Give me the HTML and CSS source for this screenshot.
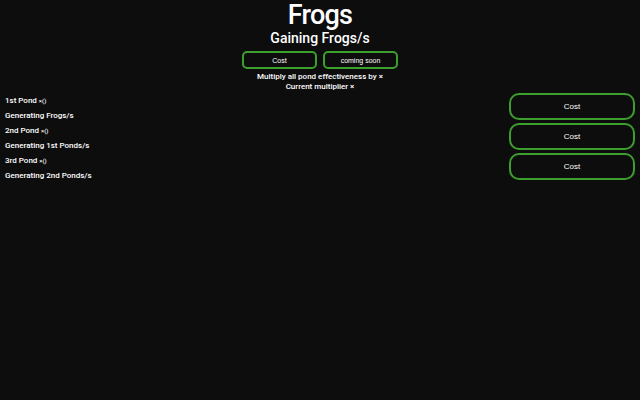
FILE: index.html
```html
<!DOCTYPE html>
<html>
<head>
<meta charset="utf-8">
<link rel="stylesheet" href="styles.css">
</head>
<body>
<div class="header">
  <h1 class="title">Frogs</h1>
  <h2 class="subtitle">Gaining Frogs/s</h2>
  <div class="topbuttons">
    <button class="smallbtn">Cost</button>
    <button class="smallbtn">coming soon</button>
  </div>
  <div class="info first">Multiply all pond effectiveness by ×</div>
  <div class="info">Current multiplier ×</div>
</div>
<div class="tiers">
  <div class="tier">
    <div class="tiertext">
      <div class="line">1st Pond <span class="mult">×()</span></div>
      <div class="line">Generating Frogs/s</div>
    </div>
    <button class="bigbtn">Cost</button>
  </div>
  <div class="tier">
    <div class="tiertext">
      <div class="line">2nd Pond <span class="mult">×()</span></div>
      <div class="line">Generating 1st Ponds/s</div>
    </div>
    <button class="bigbtn">Cost</button>
  </div>
  <div class="tier">
    <div class="tiertext">
      <div class="line">3rd Pond <span class="mult">×()</span></div>
      <div class="line">Generating 2nd Ponds/s</div>
    </div>
    <button class="bigbtn">Cost</button>
  </div>
</div>
</body>
</html>
```
FILE: styles.css
```css
html, body {
  margin: 0;
  padding: 0;
  background: #0d0d0d;
  color: #ffffff;
  font-family: Roboto, "Liberation Sans", sans-serif;
}
.header {
  display: flex;
  flex-direction: column;
  align-items: center;
}
.title {
  margin: 0;
  font-size: 27px;
  font-weight: 500;
  line-height: 30px;
  letter-spacing: -0.8px;
}
.subtitle {
  margin: 0;
  font-size: 14px;
  font-weight: 500;
  line-height: 16px;
}
.topbuttons {
  display: flex;
  gap: 6px;
  margin-top: 5px;
}
.smallbtn {
  width: 75px;
  height: 18px;
  background: #0d0d0d;
  color: #fff;
  border: 2px solid #3c9e2c;
  border-radius: 5px;
  font-family: "Liberation Sans", Arial, sans-serif;
  font-size: 7px;
  padding: 0;
}
.info {
  font-size: 8px;
  font-weight: 500;
  line-height: 10px;
}
.info.first {
  margin-top: 3px;
}
.tiers {
  display: flex;
  flex-direction: column;
  padding: 1px 5px 0 5px;
}
.tier {
  display: flex;
  justify-content: space-between;
  align-items: flex-start;
  height: 30px;
}
.line {
  font-size: 8px;
  font-weight: 500;
  line-height: 15px;
}
.mult {
  font-size: 6px;
}
.bigbtn {
  width: 126px;
  height: 27px;
  background: #0d0d0d;
  color: #fff;
  border: 2px solid #3c9e2c;
  border-radius: 10px;
  font-family: "Liberation Sans", Arial, sans-serif;
  font-size: 8px;
  padding: 0;
}
```
